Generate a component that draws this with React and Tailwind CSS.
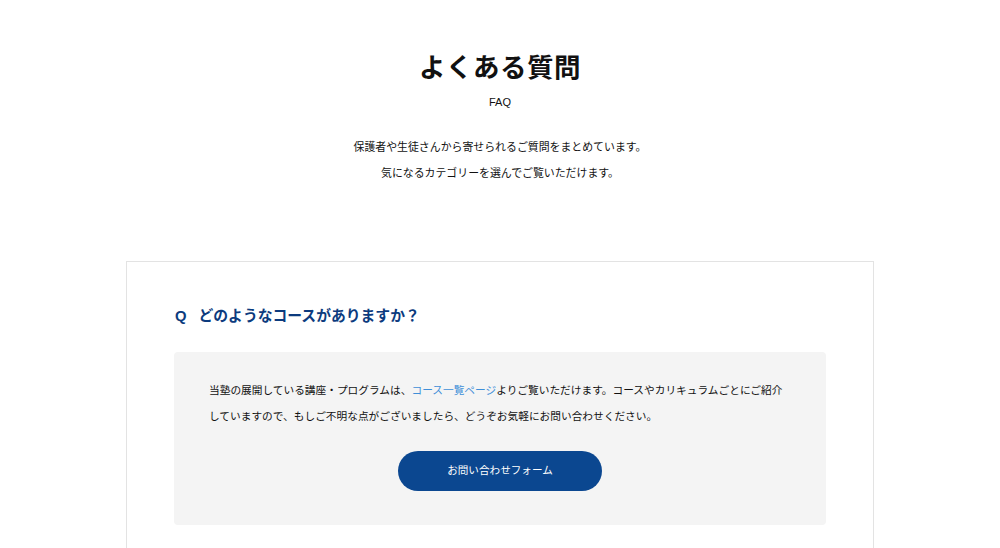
export default function App() {
  const font = {
    fontFamily: '"Liberation Sans", "Noto Sans CJK JP", sans-serif',
  }

  return (
    <div className="min-h-[548px] bg-white text-[#111]" style={font}>
      <div className="flex flex-col items-center pt-[48px]">
        <h1 className="text-[26.5px] leading-[40px] font-bold tracking-[0.5px]">よくある質問</h1>
        <p className="mt-[4px] text-[11px] leading-[20px]">FAQ</p>
        <div className="mt-[22px] text-center text-[10.9px] leading-[26px]">
          <p>保護者や生徒さんから寄せられるご質問をまとめています。</p>
          <p>気になるカテゴリーを選んでご覧いただけます。</p>
        </div>
      </div>

      <section className="mx-auto mt-[75px] w-[748px] border border-[#e3e3e3] border-b-0 px-[47px] pt-[42px] pb-[40px]">
        <h2 className="flex items-center gap-[12px] pl-[1px] text-[14.8px] leading-[24px] font-bold text-[#0c3b7e]">
          <span>Q</span>
          <span>どのようなコースがありますか？</span>
        </h2>

        <div className="mt-[24px] rounded-[4px] bg-[#f4f4f4] px-[34px] pt-[25px] pb-[34px]">
          <p className="pl-[1px] text-[10.7px] leading-[26px]">
            当塾の展開している講座・プログラムは、<a href="#" className="text-[#3f8fd8]">コース一覧ページ</a>よりご覧いただけます。コースやカリキュラムごとにご紹介していますので、もしご不明な点がございましたら、どうぞお気軽にお問い合わせください。
          </p>
          <div className="mt-[22px] flex justify-center">
            <a
              href="#"
              className="flex h-[40px] w-[204px] items-center justify-center rounded-full bg-[#0b4790] text-[10.6px] text-white"
            >
              お問い合わせフォーム
            </a>
          </div>
        </div>
      </section>
    </div>
  )
}
